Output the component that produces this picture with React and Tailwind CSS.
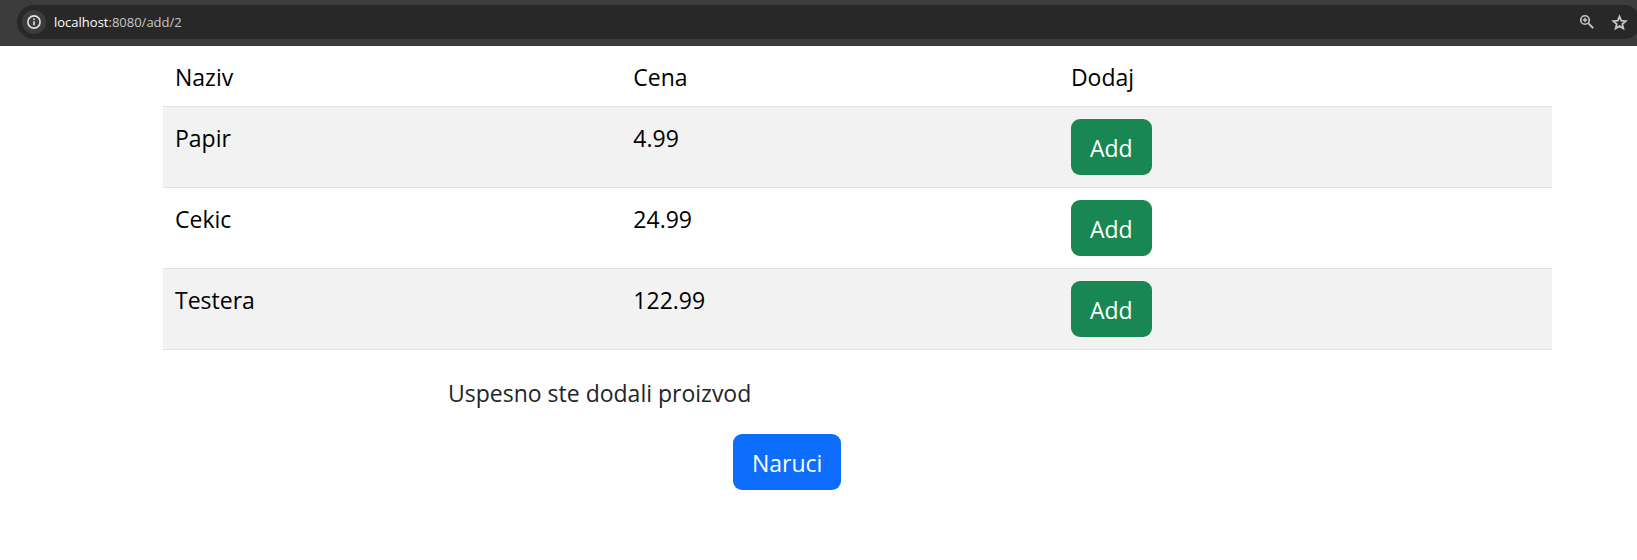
const products = [
  { id: 1, name: "Papir", price: "4.99" },
  { id: 2, name: "Cekic", price: "24.99" },
  { id: 3, name: "Testera", price: "122.99" },
];

function InfoIcon() {
  return (
    <svg viewBox="0 0 16 16" className="size-4" fill="none" stroke="currentColor" strokeWidth="1.6" aria-hidden="true">
      <circle cx="8" cy="8" r="6.1" />
      <path d="M8 7.2v4M8 4.5v1.6" />
    </svg>
  );
}

function ZoomIcon() {
  return (
    <svg viewBox="0 0 16 16" className="size-4" fill="none" stroke="currentColor" strokeWidth="1.6" aria-hidden="true">
      <circle cx="6" cy="6" r="4.3" />
      <path d="M9.2 9.2l5 5" strokeWidth="1.9" />
      <path d="M6 3.8v4.4M3.8 6h4.4" strokeWidth="1.4" />
    </svg>
  );
}

function StarIcon() {
  return (
    <svg viewBox="0 0 24 24" className="size-[19px] shrink-0" fill="none" stroke="currentColor" strokeWidth="2.3" aria-hidden="true">
      <path d="M12 4.6l2.2 5.2 5.6.5-4.25 3.7 1.27 5.5L12 16.6l-4.82 2.9 1.27-5.5L4.2 10.3l5.6-.5z" />
    </svg>
  );
}

function AddressBar() {
  return (
    <header className="flex h-[46px] items-center overflow-hidden bg-[#3c3c3c] pb-[2px] pl-[17px]">
      <div className="-mr-1 flex h-[34px] grow items-center rounded-full bg-[#282828] pl-[5px] pr-[14px] text-[#c7c7c7]">
        <button type="button" aria-label="Site information" className="flex size-6 items-center justify-center rounded-full bg-[#3c3c3c] text-[#e3e3e3]">
          <InfoIcon />
        </button>
        <label htmlFor="address" className="ml-2 text-[13px] leading-5 text-white">
          localhost
        </label>
        <input
          id="address"
          type="text"
          defaultValue=":8080/add/2"
          className="min-w-0 grow bg-transparent text-[13px] leading-5 outline-none"
        />
        <button type="button" aria-label="Zoom" className="mr-4 flex size-4 items-center justify-center">
          <ZoomIcon />
        </button>
        <button type="button" aria-label="Bookmark this page" className="flex size-4 items-center justify-center">
          <StarIcon />
        </button>
      </div>
    </header>
  );
}

export default function App() {
  return (
    <div className="min-h-screen bg-white font-['Segoe_UI','Open_Sans',sans-serif]">
      <AddressBar />
      <main className="pl-[163px] pr-[85px] text-[23px] leading-[38px] text-[#212529]">
        <table className="w-full table-fixed border-collapse text-left text-black">
          <thead>
            <tr className="border-b border-[#dee2e6]">
              <th className="w-[33%] px-3 pb-[10px] pt-3 font-normal">Naziv</th>
              <th className="w-[31.5%] px-3 pb-[10px] pt-3 font-normal">Cena</th>
              <th className="px-3 pb-[10px] pt-3 font-normal">Dodaj</th>
            </tr>
          </thead>
          <tbody>
            {products.map((product) => (
              <tr key={product.id} className="border-b border-[#dee2e6] align-top odd:bg-[#f2f2f2]">
                <td className="p-3">{product.name}</td>
                <td className="p-3">{product.price}</td>
                <td className="p-3">
                  <button type="button" className="block h-14 rounded-[9px] bg-[#198754] px-[19px] pt-[2px] text-white">
                    Add
                  </button>
                </td>
              </tr>
            ))}
          </tbody>
        </table>
        <p className="ml-[285px] mt-6">Uspesno ste dodali proizvod</p>
        <button type="button" className="ml-[570px] mt-[22px] block h-14 rounded-[9px] bg-[#0d6efd] px-[19px] pt-[2px] text-white">
          Naruci
        </button>
      </main>
    </div>
  );
}
